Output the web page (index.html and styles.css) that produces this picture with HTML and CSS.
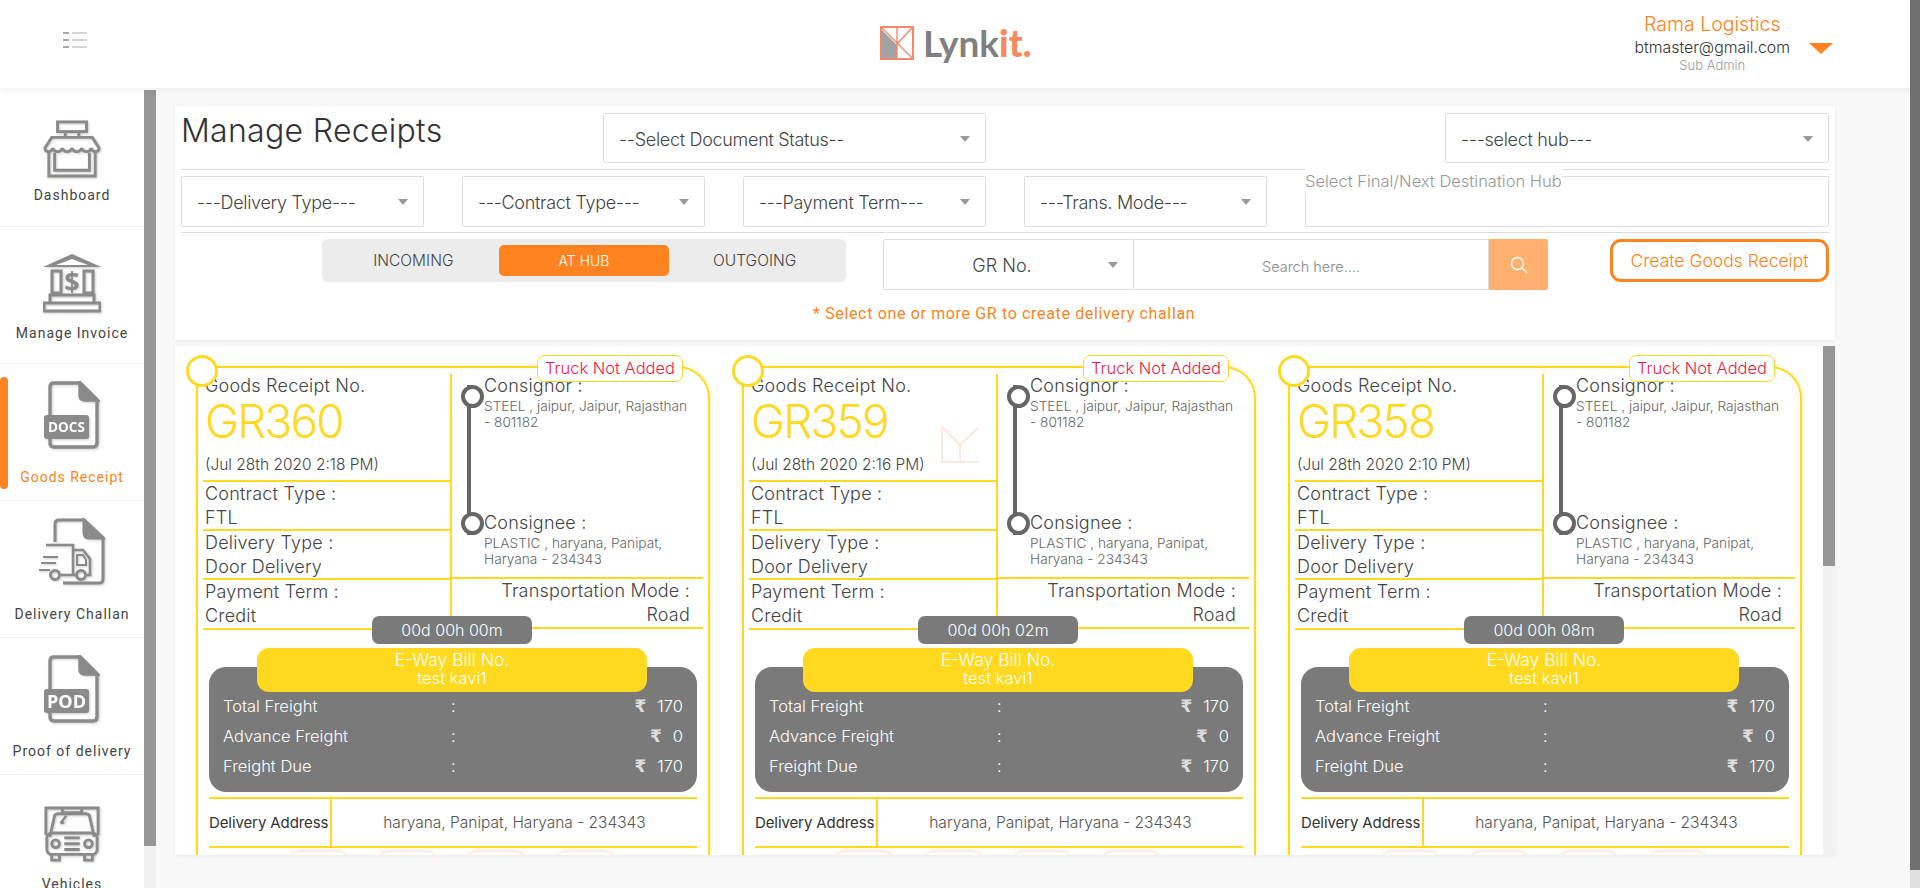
FILE: index.html
```html
<!DOCTYPE html>
<html>
	<head>
		<meta charset="utf-8">
		<meta name="viewport" content="width=device-width, initial-scale=1.0">
		<link rel="stylesheet" href="styles.css">
		<title>Manage Receipts</title>
	</head>
	<body>
		<header class="topbar">
			<div class="menu-btn">
				<svg width="24" height="16" viewBox="0 0 24 16"><path d="M0 1h6M0 8h6M0 15h6" stroke="#a8a8a8" stroke-width="2"/><path d="M9 1h15M9 8h15M9 15h15" stroke="#d6d6d6" stroke-width="2"/></svg>
			</div>
			<div class="logo">
				<svg width="34" height="34" viewBox="0 0 34 34">
					<rect x="1" y="1" width="32" height="32" fill="#fff" stroke="#f08a68" stroke-width="2"/>
					<path d="M2 4L17 19V32H2z" fill="#a3a3a3"/>
					<path d="M2 2L32 32M32 2L17 18M17 2V32" stroke="#f08a68" stroke-width="1.4" fill="none"/>
				</svg>
				<span class="logo-text">Lynk<b>it.</b></span>
			</div>
			<div class="account">
				<div class="account-text">
					<div class="account-name">Rama Logistics</div>
					<div class="account-mail">btmaster@gmail.com</div>
					<div class="account-role">Sub Admin</div>
				</div>
				<div class="account-arrow"></div>
			</div>
		</header>
		<div class="layout">
			<aside class="sidebar">
				<nav class="side-nav">
					<a class="side-item item-dash">
						<svg class="side-icon" width="58" height="58" viewBox="0 0 60 60" fill="none" stroke="#8a8a8a" stroke-width="3">
							<rect x="15" y="2" width="30" height="10"/>
							<path d="M23 12v6M37 12v6"/>
							<path d="M9 18H51L58 29C58 34 51 34 50 29C49 34 41 34 40 29C39 34 31 34 30 29C29 34 21 34 20 29C19 34 11 34 10 29C9 34 2 34 2 29z"/>
							<path d="M6 34V58H54V34M12 34V52H48V34"/>
						</svg>
						<span>Dashboard</span>
					</a>
					<a class="side-item item-bank">
						<svg class="side-icon" width="58" height="60" viewBox="0 0 58 60" fill="none" stroke="#8a8a8a" stroke-width="3">
							<path d="M0 14L29 1L58 14z" fill="#8a8a8a" stroke="none"/>
							<path d="M29 6L13 12H45z" fill="#fff" stroke="none"/>
							<rect x="9" y="18" width="9" height="22"/>
							<rect x="41" y="18" width="9" height="22"/>
							<path d="M7 50V42H51V50M1 50H57V58H1z"/>
							<text x="29" y="38" text-anchor="middle" class="bank-sign">$</text>
						</svg>
						<span>Manage Invoice</span>
					</a>
					<a class="side-item item-doc active">
						<svg class="side-icon" width="56" height="68" viewBox="0 0 56 68" fill="none" stroke="#8a8a8a" stroke-width="3.4">
							<path d="M6 34V6Q6 2 10 2H36L53 19V62Q53 66 49 66H10Q6 66 6 62V58"/>
							<path d="M36 2V14Q36 19 41 19H53z" fill="#8a8a8a"/>
							<rect x="0" y="34" width="45" height="24" rx="3" fill="#8a8a8a" stroke="none"/>
							<text x="22.5" y="51" text-anchor="middle" class="file-tag">DOCS</text>
						</svg>
						<span>Goods Receipt</span>
					</a>
					<a class="side-item item-doc">
						<svg class="side-icon" width="66" height="68" viewBox="0 0 66 68" fill="none" stroke="#8a8a8a" stroke-width="3">
							<path d="M16 24V6Q16 2 20 2H45L64 20V61Q64 65 60 65H24"/>
							<path d="M45 2V14Q45 20 50 20H64z" fill="#8a8a8a"/>
							<path d="M7 27H34V57H22M34 32H44L51 41V57H47M34 57H36" stroke-width="2.6"/>
							<path d="M38 37H44L47 42V47H38z" stroke-width="2"/>
							<circle cx="16" cy="57" r="4.5"/><circle cx="42" cy="57" r="4.5"/>
							<path d="M4 39H19M2 45H17M0 52H11" stroke-width="2.2"/>
						</svg>
						<span>Delivery Challan</span>
					</a>
					<a class="side-item item-doc">
						<svg class="side-icon" width="56" height="68" viewBox="0 0 56 68" fill="none" stroke="#8a8a8a" stroke-width="3.4">
							<path d="M6 34V6Q6 2 10 2H36L53 19V62Q53 66 49 66H10Q6 66 6 62V58"/>
							<path d="M36 2V14Q36 19 41 19H53z" fill="#8a8a8a"/>
							<rect x="0" y="34" width="45" height="24" rx="3" fill="#8a8a8a" stroke="none"/>
							<text x="22.5" y="52.5" text-anchor="middle" class="file-tag big">POD</text>
						</svg>
						<span>Proof of delivery</span>
					</a>
					<a class="side-item item-van">
						<svg class="side-icon" width="58" height="58" viewBox="0 0 60 60" fill="none" stroke="#8a8a8a" stroke-width="3">
							<path d="M3 30V2H57V30M20 2V7H40V2"/>
							<path d="M7 32L12 10Q13 8 16 8H44Q47 8 48 10L53 32"/>
							<path d="M18 18L24 10M18 18L22 17" stroke-width="2.4"/>
							<rect x="4" y="28" width="52" height="22" rx="5"/>
							<circle cx="13" cy="39" r="4"/><circle cx="47" cy="39" r="4"/>
							<path d="M22 33H38M22 39H38M22 45H38"/>
							<path d="M9 50V56H17V50M43 50V56H51V50"/>
						</svg>
						<span>Vehicles</span>
					</a>
				</nav>
				<div class="side-scroll"><div class="side-thumb"></div></div>
			</aside>
			<main class="content">
				<section class="filters">
					<div class="filter-row row-one">
						<h1 class="page-title">Manage Receipts</h1>
						<div class="select status-select">--Select Document Status--</div>
						<div class="select hub-select">---select hub---</div>
					</div>
					<div class="filter-row row-two">
						<div class="select">---Delivery Type---</div>
						<div class="select">---Contract Type---</div>
						<div class="select">---Payment Term---</div>
						<div class="select">---Trans. Mode---</div>
						<div class="dest-box"><label class="dest-label">Select Final/Next Destination Hub</label></div>
					</div>
					<div class="filter-row row-three">
						<div class="toggle">
							<span class="toggle-opt">INCOMING</span>
							<span class="toggle-opt on">AT HUB</span>
							<span class="toggle-opt">OUTGOING</span>
						</div>
						<div class="search">
							<div class="select search-type">GR No.</div>
							<div class="search-input">Search here....</div>
							<div class="search-btn">
								<svg width="18" height="18" viewBox="0 0 18 18" fill="none" stroke="#fff" stroke-width="1.5"><circle cx="7.5" cy="7.5" r="6"/><path d="M12 12l5 5"/></svg>
							</div>
						</div>
						<button class="create-btn">Create Goods Receipt</button>
					</div>
					<p class="hint">* Select one or more GR to create delivery challan</p>
				</section>
				<section class="receipts">
					<div class="card-list">
						<article class="card">
							<span class="card-check"></span>
							<span class="card-flag">Truck Not Added</span>
							<div class="card-top">
								<div class="col-left">
									<div class="cell cell-id">
										<div class="label">Goods Receipt No.</div>
										<div class="gr-no">GR360</div>
										<div class="label gr-date">(Jul 28th 2020 2:18 PM)</div>
									</div>
									<div class="cell"><div class="label">Contract Type :</div><div class="label">FTL</div></div>
									<div class="cell"><div class="label">Delivery Type :</div><div class="label">Door Delivery</div></div>
									<div class="cell"><div class="label">Payment Term :</div><div class="label">Credit</div></div>
								</div>
								<div class="col-right">
									<div class="route">
										<div class="route-line"></div>
										<div class="route-stops">
											<div class="stop"><div class="label">Consignor :</div><div class="addr">STEEL , jaipur, Jaipur, Rajasthan<br>- 801182</div></div>
											<div class="stop"><div class="label">Consignee :</div><div class="addr">PLASTIC , haryana, Panipat,<br>Haryana - 234343</div></div>
										</div>
									</div>
									<div class="mode"><div class="label">Transportation Mode :</div><div class="label">Road</div></div>
								</div>
							</div>
							<div class="timer">00d 00h 00m</div>
							<div class="eway"><div>E-Way Bill No.</div><div class="eway-no">test kavi1</div></div>
							<div class="freight">
								<div class="freight-row"><span>Total Freight</span><span>:</span><span class="amount"><i>₹</i>170</span></div>
								<div class="freight-row"><span>Advance Freight</span><span>:</span><span class="amount"><i>₹</i>0</span></div>
								<div class="freight-row"><span>Freight Due</span><span>:</span><span class="amount"><i>₹</i>170</span></div>
							</div>
							<div class="address"><div class="address-title">Delivery Address</div><div class="address-text">haryana, Panipat, Haryana - 234343</div></div>
							<div class="card-actions"><span></span><span></span><span></span><span></span></div>
						</article>
						<article class="card">
							<span class="card-check"></span>
							<span class="card-flag">Truck Not Added</span>
							<svg class="watermark" width="40" height="40" viewBox="0 0 40 40" fill="none" stroke="#fde7de" stroke-width="2"><path d="M2 2V37H38M2 2L20 20L38 3M20 20V37"/></svg>
							<div class="card-top">
								<div class="col-left">
									<div class="cell cell-id">
										<div class="label">Goods Receipt No.</div>
										<div class="gr-no">GR359</div>
										<div class="label gr-date">(Jul 28th 2020 2:16 PM)</div>
									</div>
									<div class="cell"><div class="label">Contract Type :</div><div class="label">FTL</div></div>
									<div class="cell"><div class="label">Delivery Type :</div><div class="label">Door Delivery</div></div>
									<div class="cell"><div class="label">Payment Term :</div><div class="label">Credit</div></div>
								</div>
								<div class="col-right">
									<div class="route">
										<div class="route-line"></div>
										<div class="route-stops">
											<div class="stop"><div class="label">Consignor :</div><div class="addr">STEEL , jaipur, Jaipur, Rajasthan<br>- 801182</div></div>
											<div class="stop"><div class="label">Consignee :</div><div class="addr">PLASTIC , haryana, Panipat,<br>Haryana - 234343</div></div>
										</div>
									</div>
									<div class="mode"><div class="label">Transportation Mode :</div><div class="label">Road</div></div>
								</div>
							</div>
							<div class="timer">00d 00h 02m</div>
							<div class="eway"><div>E-Way Bill No.</div><div class="eway-no">test kavi1</div></div>
							<div class="freight">
								<div class="freight-row"><span>Total Freight</span><span>:</span><span class="amount"><i>₹</i>170</span></div>
								<div class="freight-row"><span>Advance Freight</span><span>:</span><span class="amount"><i>₹</i>0</span></div>
								<div class="freight-row"><span>Freight Due</span><span>:</span><span class="amount"><i>₹</i>170</span></div>
							</div>
							<div class="address"><div class="address-title">Delivery Address</div><div class="address-text">haryana, Panipat, Haryana - 234343</div></div>
							<div class="card-actions"><span></span><span></span><span></span><span></span></div>
						</article>
						<article class="card">
							<span class="card-check"></span>
							<span class="card-flag">Truck Not Added</span>
							<div class="card-top">
								<div class="col-left">
									<div class="cell cell-id">
										<div class="label">Goods Receipt No.</div>
										<div class="gr-no">GR358</div>
										<div class="label gr-date">(Jul 28th 2020 2:10 PM)</div>
									</div>
									<div class="cell"><div class="label">Contract Type :</div><div class="label">FTL</div></div>
									<div class="cell"><div class="label">Delivery Type :</div><div class="label">Door Delivery</div></div>
									<div class="cell"><div class="label">Payment Term :</div><div class="label">Credit</div></div>
								</div>
								<div class="col-right">
									<div class="route">
										<div class="route-line"></div>
										<div class="route-stops">
											<div class="stop"><div class="label">Consignor :</div><div class="addr">STEEL , jaipur, Jaipur, Rajasthan<br>- 801182</div></div>
											<div class="stop"><div class="label">Consignee :</div><div class="addr">PLASTIC , haryana, Panipat,<br>Haryana - 234343</div></div>
										</div>
									</div>
									<div class="mode"><div class="label">Transportation Mode :</div><div class="label">Road</div></div>
								</div>
							</div>
							<div class="timer">00d 00h 08m</div>
							<div class="eway"><div>E-Way Bill No.</div><div class="eway-no">test kavi1</div></div>
							<div class="freight">
								<div class="freight-row"><span>Total Freight</span><span>:</span><span class="amount"><i>₹</i>170</span></div>
								<div class="freight-row"><span>Advance Freight</span><span>:</span><span class="amount"><i>₹</i>0</span></div>
								<div class="freight-row"><span>Freight Due</span><span>:</span><span class="amount"><i>₹</i>170</span></div>
							</div>
							<div class="address"><div class="address-title">Delivery Address</div><div class="address-text">haryana, Panipat, Haryana - 234343</div></div>
							<div class="card-actions"><span></span><span></span><span></span><span></span></div>
						</article>
					</div>
					<div class="list-scroll"><div class="list-thumb"></div></div>
				</section>
			</main>
		</div>
		<div class="page-scroll"></div>
	</body>
</html>
```

FILE: styles.css
```css
* {
	margin: 0;
	padding: 0;
	box-sizing: border-box;
}

html,
body {
	height: 100%;
	overflow: hidden;
}

body {
	display: flex;
	flex-direction: column;
	background-color: #f8f8f8;
	font-family: Inter, "Liberation Sans", sans-serif;
	font-weight: 300;
	color: #333;
}

.page-scroll {
	position: fixed;
	top: 0;
	right: 0;
	bottom: 0;
	width: 10px;
	background: linear-gradient(#6f6f6f 870px, #e0e0e0 870px);
}

.topbar {
	position: relative;
	display: flex;
	align-items: center;
	justify-content: space-between;
	flex: none;
	height: 88px;
	padding: 0 87px 0 63px;
	background-color: #fff;
	box-shadow: 0 2px 8px rgba(0, 0, 0, 0.05);
}

.menu-btn {
	display: flex;
	width: 24px;
	margin-top: -8px;
}

.logo {
	position: absolute;
	top: 26px;
	left: 880px;
	display: flex;
	align-items: center;
	gap: 9px;
}

.logo-text {
	font-family: Lato, sans-serif;
	font-size: 37px;
	font-weight: 700;
	line-height: 34px;
	color: #808080;
}

.logo-text b {
	color: #f58a5c;
}

.account {
	display: flex;
	align-items: center;
	gap: 19px;
	margin-top: -4px;
}

.account-text {
	text-align: center;
}

.account-name {
	font-size: 19.5px;
	line-height: 26px;
	color: #ff8220;
}

.account-mail {
	margin-top: 2px;
	font-size: 15.8px;
	line-height: 18px;
	color: #333;
}

.account-role {
	font-size: 13px;
	line-height: 17px;
	color: #999;
}

.account-arrow {
	width: 0;
	height: 0;
	margin-top: 13px;
	border-top: 11px solid #ff8220;
	border-left: 12px solid transparent;
	border-right: 12px solid transparent;
}

.layout {
	display: flex;
	flex: 1;
	min-height: 0;
}

.sidebar {
	display: flex;
	flex: none;
	width: 156px;
	background-color: #fff;
}

.side-nav {
	flex: none;
	width: 144px;
	overflow: hidden;
}

.side-item {
	position: relative;
	display: flex;
	flex-direction: column;
	align-items: center;
	height: 137px;
	border-bottom: 1px solid #f1f1f1;
	font-family: Roboto, sans-serif;
	font-size: 14px;
	font-weight: 400;
	letter-spacing: 1px;
	line-height: 17px;
	color: #444;
}

.item-dash {
	height: 139px;
	padding-top: 32px;
}

.item-bank {
	padding-top: 26px;
}

.item-doc {
	padding-top: 17px;
}

.item-van {
	padding-top: 31px;
}

.item-dash .side-icon {
	margin-bottom: 9px;
}

.item-bank .side-icon,
.item-van .side-icon {
	margin-bottom: 12px;
}

.item-doc .side-icon {
	margin-bottom: 20px;
}

.side-item.active {
	color: #ff8220;
}

.side-item.active::before {
	content: "";
	position: absolute;
	top: 13px;
	left: 0;
	width: 8px;
	height: 112px;
	border-radius: 4px;
	background-color: #ff8220;
}

.side-icon {
	flex: none;
	filter: drop-shadow(1px 1px 1px rgba(0, 0, 0, 0.2));
}

.file-tag {
	font-family: "Open Sans", sans-serif;
	font-size: 13.5px;
	font-weight: 700;
	letter-spacing: 0;
	fill: #fff;
	stroke: none;
}

.file-tag.big {
	font-size: 18px;
}

.bank-sign {
	font-family: "Open Sans", sans-serif;
	font-size: 27px;
	font-weight: 700;
	letter-spacing: 0;
	fill: #8a8a8a;
	stroke: none;
}

.side-scroll {
	width: 12px;
	background-color: #f1f1f1;
}

.side-thumb {
	height: 758px;
	border-top: 2px solid #fff;
	background-color: #969696;
}

.content {
	flex: 1;
	min-width: 0;
	padding: 18px 85px 33px 19px;
}

.filters {
	height: 234px;
	padding: 7px 6px 0;
	background-color: #fff;
	box-shadow: 0 1px 4px rgba(0, 0, 0, 0.06);
}

.filter-row {
	display: flex;
}

.row-one {
	align-items: flex-start;
	height: 57px;
	border-bottom: 1px solid #ddd;
}

.page-title {
	width: 422px;
	font-size: 32px;
	font-weight: 300;
	line-height: 36px;
	letter-spacing: 0.3px;
	color: #333;
}

.select {
	position: relative;
	display: flex;
	align-items: center;
	height: 50px;
	padding: 2px 15px 0;
	border: 1px solid #ddd;
	border-radius: 2px;
	background-color: #fff;
	font-size: 18px;
	letter-spacing: -0.3px;
	color: #444;
}

.select::after {
	content: "";
	position: absolute;
	top: 22px;
	right: 15px;
	border-top: 6px solid #999;
	border-left: 5px solid transparent;
	border-right: 5px solid transparent;
}

.status-select {
	width: 383px;
}

.hub-select {
	width: 384px;
	margin-left: auto;
}

.row-two {
	gap: 38px;
	height: 63px;
	padding-top: 6px;
	border-bottom: 1px solid #ddd;
}

.row-two .select {
	flex: none;
	width: 243px;
	height: 51px;
}

.dest-box {
	position: relative;
	flex: 1;
	height: 51px;
	border: 1px solid #ddd;
	border-radius: 2px;
}

.dest-label {
	position: absolute;
	top: -8px;
	left: -1px;
	background-color: #fff;
	font-size: 16.5px;
	line-height: 24px;
	color: #999;
}

.row-three {
	height: 58px;
	padding-top: 6px;
}

.toggle {
	display: flex;
	align-items: center;
	width: 524px;
	height: 43px;
	margin-left: 141px;
	padding: 0 6px;
	border-radius: 6px;
	background-color: #ececec;
}

.toggle-opt {
	flex: 1;
	display: flex;
	align-items: center;
	justify-content: center;
	height: 31px;
	border-radius: 5px;
	font-size: 15.5px;
	color: #444;
}

.toggle-opt.on {
	background-color: #ff8220;
	font-size: 14px;
	color: #fff;
}

.search {
	display: flex;
	width: 665px;
	height: 51px;
	margin-left: 37px;
}

.search-type {
	justify-content: center;
	flex: none;
	width: 251px;
	height: 51px;
	padding-right: 28px;
	letter-spacing: 0;
}

.search-input {
	flex: 1;
	display: flex;
	align-items: center;
	justify-content: center;
	padding-top: 3px;
	border: 1px solid #ddd;
	border-left: 0;
	font-size: 14.5px;
	color: #888;
}

.search-btn {
	display: flex;
	align-items: center;
	justify-content: center;
	flex: none;
	width: 59px;
	border-radius: 0 2px 2px 0;
	background-color: #ffb06f;
}

.create-btn {
	flex: none;
	width: 219px;
	height: 43px;
	margin-left: 62px;
	border: 3px solid #ff8220;
	border-radius: 11px;
	background-color: #fff;
	font-family: inherit;
	font-size: 17.5px;
	font-weight: 300;
	color: #ff8220;
}

.hint {
	margin-top: 13px;
	padding-left: 632px;
	font-family: Roboto, sans-serif;
	font-size: 16px;
	font-weight: 400;
	letter-spacing: 0.65px;
	line-height: 20px;
	color: #ff8220;
}

.receipts {
	position: relative;
	height: 509px;
	margin-top: 6px;
	overflow: hidden;
	background-color: #fff;
	box-shadow: 0 1px 4px rgba(0, 0, 0, 0.06);
}

.card-list {
	display: flex;
	gap: 32px;
	padding: 20px 0 0 21px;
}

.card {
	position: relative;
	flex: none;
	width: 514px;
	height: 600px;
	padding: 6px 5px 0;
	border: 2px solid #ffd91f;
	border-bottom: 0;
	border-top-right-radius: 32px;
	box-shadow: 0 0 5px rgba(255, 217, 31, 0.35);
}

.card-check {
	position: absolute;
	top: -13px;
	left: -12px;
	z-index: 2;
	width: 32px;
	height: 32px;
	border: 3px solid #ffd91f;
	border-radius: 50%;
	background-color: #fff;
}

.card-flag {
	position: absolute;
	top: -13px;
	right: 25px;
	width: 146px;
	height: 27px;
	border: 1px solid #ffd91f;
	border-radius: 7px;
	background-color: #fff;
	font-size: 16.5px;
	line-height: 25px;
	text-align: center;
	color: #f5193f;
}

.watermark {
	position: absolute;
	top: 57px;
	left: 196px;
}

.card-top {
	display: flex;
	height: 256px;
}

.label {
	font-size: 18px;
	letter-spacing: 0.2px;
	line-height: 24px;
	color: #444;
}

.col-left {
	display: flex;
	flex-direction: column;
	flex: none;
	width: 249px;
	border-right: 2px solid #ffd91f;
}

.cell {
	flex: none;
	height: 49px;
	padding-left: 2px;
	border-bottom: 2px solid #ffd91f;
}

.cell:last-child {
	height: 50px;
}

.cell-id {
	height: 108px;
}

.gr-no {
	margin-top: -4px;
	font-size: 46px;
	line-height: 54px;
	letter-spacing: -1.9px;
	color: #ffd91f;
}

.gr-date {
	margin-top: 5px;
	font-size: 15.5px;
	letter-spacing: 0;
}

.col-right {
	display: flex;
	flex-direction: column;
	flex: 1;
}

.route {
	display: flex;
	flex: none;
	height: 205px;
	padding: 11px 0 0 9px;
	border-bottom: 2px solid #ffd91f;
}

/* the two rings are the pseudo elements, the bar between them is a background */
.route-line {
	position: relative;
	flex: none;
	width: 15px;
	height: 150px;
	margin-right: 8px;
	background: linear-gradient(#666, #666) center / 4px 100% no-repeat;
}

.route-line::before,
.route-line::after {
	content: "";
	position: absolute;
	left: 0;
	width: 15px;
	height: 15px;
	border: 4px solid #666;
	border-radius: 50%;
	background-color: #fff;
}

.route-line::before {
	top: 0;
}

.route-line::after {
	bottom: 0;
}

.route-stops {
	display: flex;
	flex-direction: column;
	gap: 56px;
	flex: 1;
	margin-top: -11px;
}

.stop {
	flex: none;
	height: 81px;
}

.addr {
	font-size: 13.7px;
	line-height: 16px;
	color: #666;
}

.mode {
	height: 50px;
	padding-right: 13px;
	border-bottom: 2px solid #ffd91f;
	text-align: right;
}

.timer {
	position: absolute;
	top: 248px;
	left: 174px;
	width: 160px;
	height: 28px;
	border-radius: 7px;
	background-color: #7a7a7a;
	font-size: 16px;
	line-height: 28px;
	text-align: center;
	color: #fff;
}

.eway {
	position: relative;
	z-index: 1;
	width: 390px;
	height: 44px;
	margin: 18px 0 -25px 54px;
	padding-top: 2px;
	border-radius: 12px;
	background-color: #ffd91f;
	font-size: 17.5px;
	line-height: 19px;
	text-align: center;
	color: #fff;
}

.eway-no {
	font-size: 16.5px;
}

.freight {
	height: 125px;
	margin: 0 6px;
	padding: 24px 14px 0 14px;
	border-radius: 17px;
	background-color: #7a7a7a;
	color: #fff;
}

.freight-row {
	display: grid;
	grid-template-columns: 228px 10px 1fr;
	height: 30px;
	font-size: 16.5px;
	line-height: 30px;
}

.amount {
	text-align: right;
}

.amount i {
	margin-right: 11px;
	font-family: "DejaVu Sans", sans-serif;
	font-size: 17px;
	font-weight: 700;
	font-style: normal;
	color: #ddd;
}

.address {
	display: flex;
	height: 51px;
	margin: 5px 6px 0;
	border-top: 2px solid #ffd91f;
	border-bottom: 2px solid #ffd91f;
}

.address-title {
	flex: none;
	width: 123px;
	border-right: 2px solid #ffd91f;
	font-size: 15px;
	font-weight: 400;
	letter-spacing: -0.1px;
	line-height: 48px;
	white-space: nowrap;
	color: #333;
}

.address-text {
	flex: 1;
	font-size: 15.5px;
	line-height: 48px;
	text-align: center;
	color: #555;
}

.card-actions {
	display: flex;
	gap: 32px;
	margin: 4px 0 0 87px;
}

.card-actions span {
	width: 57px;
	height: 30px;
	border-radius: 10px;
	box-shadow: 0 0 5px rgba(245, 138, 92, 0.5);
}

.list-scroll {
	position: absolute;
	top: 0;
	right: 0;
	bottom: 0;
	width: 12px;
	background-color: #f1f1f1;
}

.list-thumb {
	height: 220px;
	background-color: #969696;
}
```
